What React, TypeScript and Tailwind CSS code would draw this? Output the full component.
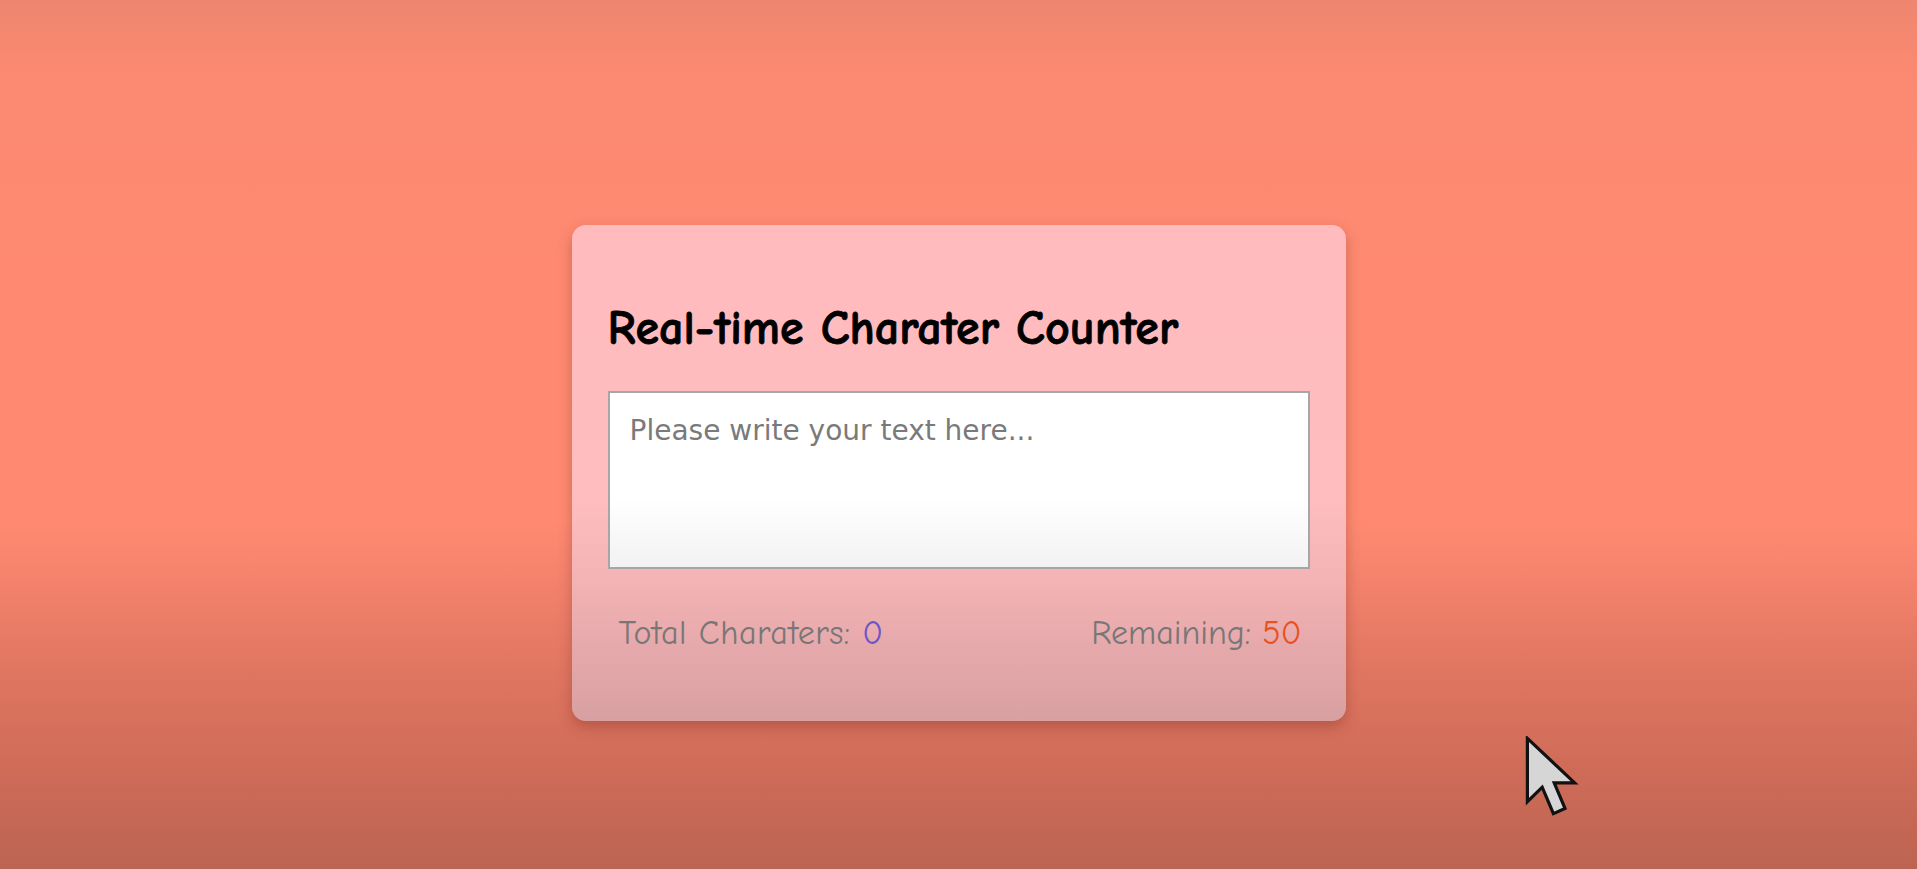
import React, { useState } from "react";

const comic = '"Comic Sans MS", "Comic Neue", "DejaVu Sans Condensed", "DejaVu Sans", sans-serif';

export default function App() {
  const [text, setText] = useState("");
  const max = 50;
  return (
    <div className="relative h-[869px] w-full overflow-hidden flex justify-center pt-[225px] bg-[linear-gradient(to_bottom,#ee866f_0%,#fb8971_8%,#ff8a71_30%,#ff8a71_60%,#f5836d_66%,#e27762_76%,#cf6c58_88%,#bc6452_100%)]">
      <div
        className="w-[774px] h-[496px] rounded-[14px] px-[36px] pt-[76px] bg-[linear-gradient(to_bottom,#ffbbbe_0%,#ffbdbf_55%,#f3b2b4_72%,#e6a9ab_85%,#d8a0a2_100%)] shadow-[0_6px_14px_rgba(120,40,30,0.35)]"
        style={{ fontFamily: comic }}
      >
        <h1 className="text-[48px] leading-[56px] font-bold text-black whitespace-nowrap [-webkit-text-stroke:0.8px_black]">Real-time Charater Counter</h1>
        <textarea
          value={text}
          onChange={(e) => setText(e.target.value.slice(0, max))}
          placeholder="Please write your text here..."
          className="mt-[34px] block w-full h-[178px] resize-none border-2 border-[#a6a6a6] bg-[linear-gradient(to_bottom,#ffffff_0%,#ffffff_60%,#f2f2f2_100%)] px-[20px] pt-[17px] text-[28px] text-[#333] placeholder:text-[#7a7a7a] outline-none"
          style={{ fontFamily: '"DejaVu Sans", "Liberation Sans", sans-serif' }}
        />
        <div className="mt-[44px] flex justify-between pl-[11px] pr-[8px] text-[34px] leading-[40px] text-[#777777] whitespace-nowrap">
          <span className="tracking-[0.5px]">
            Total Charaters: <span className="text-[#6a56c8]">{text.length}</span>
          </span>
          <span>
            Remaining: <span className="text-[#e8521c]">{max - text.length}</span>
          </span>
        </div>
      </div>
      <svg
        className="absolute left-[1525px] top-[736px]"
        width="54"
        height="82"
        viewBox="0 0 13.5 20.5"
      >
        <path
          d="M0.6 0.6 L0.6 16.4 L4.3 12.8 L7.1 19.4 L10 18.1 L7.3 11.7 L12.4 11.7 Z"
          fill="#d6d6d6"
          stroke="#111"
          strokeWidth="0.8"
          strokeLinejoin="miter"
        />
      </svg>
    </div>
  );
}
